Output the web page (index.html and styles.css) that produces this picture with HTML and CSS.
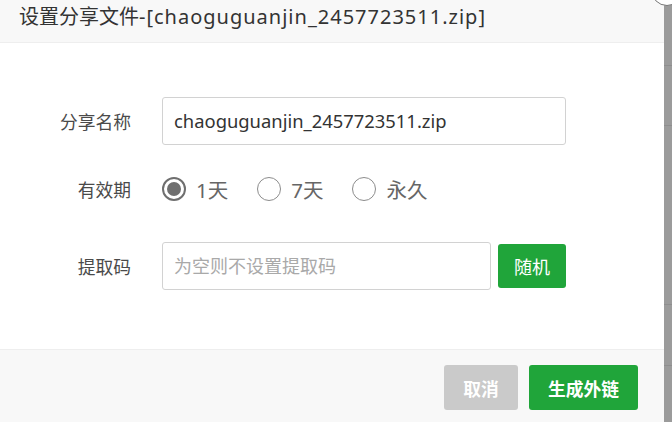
FILE: index.html
```html
<!DOCTYPE html>
<html lang="zh-CN">
<head>
<meta charset="utf-8">
<title>设置分享文件</title>
<link rel="stylesheet" href="styles.css">
</head>
<body>
<div class="layer">
  <div class="layer-title">设置分享文件<span class="title-latin">-[chaoguguanjin_2457723511.zip]</span></div>
  <div class="layer-content">
    <div class="form-row row-name">
      <label class="form-label">分享名称</label>
      <div class="input input-wide">chaoguguanjin_2457723511.zip</div>
    </div>
    <div class="form-row row-expire">
      <label class="form-label">有效期</label>
      <div class="radios">
        <span class="radio checked"><i class="radio-dot"></i><span class="radio-text">1天</span></span>
        <span class="radio"><i class="radio-dot"></i><span class="radio-text">7天</span></span>
        <span class="radio"><i class="radio-dot"></i><span class="radio-text">永久</span></span>
      </div>
    </div>
    <div class="form-row row-code">
      <label class="form-label">提取码</label>
      <div class="input input-code placeholder">为空则不设置提取码</div>
      <button class="btn btn-random">随机</button>
    </div>
  </div>
  <div class="layer-footer">
    <button class="btn btn-cancel">取消</button>
    <button class="btn btn-ok">生成外链</button>
  </div>
</div>
<div class="shade">
  <div class="shade-row r1"></div>
  <div class="shade-row r2"></div>
  <div class="shade-row r3"></div>
  <div class="shade-row r4"></div>
</div>
<span class="close-btn"></span>
</body>
</html>
```

FILE: styles.css
```css
html, body {
  margin: 0;
  padding: 0;
}
body {
  width: 672px;
  height: 422px;
  overflow: hidden;
  display: flex;
  background: #9b9b9b;
  font-family: "Noto Sans", "Noto Sans CJK SC", sans-serif;
  position: relative;
}
.layer {
  width: 664px;
  height: 422px;
  background: #fff;
  display: flex;
  flex-direction: column;
}
.layer-title {
  height: 43px;
  box-sizing: border-box;
  border-bottom: 1px solid #eee;
  background: #f8f8f8;
  padding-left: 19px;
  line-height: 33px;
  font-size: 20px;
  color: #333;
  white-space: nowrap;
}
.title-latin {
  letter-spacing: 1px;
}
.layer-content {
  height: 306px;
  padding-top: 54px;
  box-sizing: border-box;
}
.form-row {
  display: flex;
  align-items: center;
}
.row-expire {
  margin-top: 20px;
  height: 48px;
}
.row-code {
  margin-top: 29px;
}
.form-label {
  width: 131px;
  margin-right: 31px;
  text-align: right;
  font-size: 17.75px;
  color: #4a4a4a;
}
.input {
  height: 48px;
  box-sizing: border-box;
  border: 1px solid #d2d2d2;
  border-radius: 3px;
  padding-left: 11px;
  line-height: 46px;
  font-size: 18.4px;
  color: #333;
}
.input-wide {
  width: 404px;
}
.input-code {
  width: 329px;
  font-size: 18px;
}
.placeholder {
  color: #a9a9a9;
}
.radios {
  display: flex;
  align-items: center;
}
.radio {
  display: flex;
  align-items: center;
  margin-right: 29px;
  color: #666;
  font-size: 20.5px;
}
.radio-dot {
  width: 24px;
  height: 24px;
  box-sizing: border-box;
  border: 1.5px solid #8c8c8c;
  border-radius: 50%;
  margin-right: 10px;
  position: relative;
}
.radio.checked .radio-dot {
  border: 2px solid #6f6f6f;
}
.radio.checked .radio-dot::after {
  content: "";
  position: absolute;
  left: 3px;
  top: 3px;
  width: 14px;
  height: 14px;
  border-radius: 50%;
  background: #6f6f6f;
}
.btn {
  border: 0;
  border-radius: 3px;
  color: #fff;
  font-family: "Noto Sans CJK SC", sans-serif;
  padding: 0;
  cursor: pointer;
}
.btn-random {
  margin-left: 7px;
  width: 68px;
  height: 44px;
  background: #20a53a;
  font-size: 18px;
}
.layer-footer {
  flex: 1;
  border-top: 1px solid #eee;
  background: #f8f8f8;
  display: flex;
  justify-content: flex-end;
  align-items: flex-start;
  padding: 15px 26px 0 0;
  gap: 11px;
}
.btn-cancel,
.btn-ok {
  height: 45px;
  font-size: 17.75px;
  font-weight: bold;
}
.btn-cancel {
  width: 74px;
  background: #cacaca;
}
.btn-ok {
  width: 109px;
  background: #20a53a;
}
.shade {
  flex: 1;
  display: flex;
  flex-direction: column;
}
.shade-row {
  border-bottom: 1px solid #8e8e8e;
}
.r1 { height: 65px; }
.r2 { height: 59px; }
.r3 { height: 178px; }
.r4 { height: 60px; }
.close-btn {
  position: absolute;
  left: 651px;
  top: -26px;
  width: 30px;
  height: 30px;
  border-radius: 50%;
  background: #fff;
  border: 1px solid #777;
}
```
